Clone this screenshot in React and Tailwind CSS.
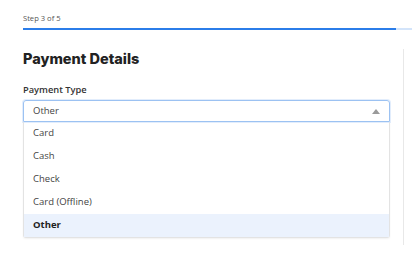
import React from 'react';

const options = ['Card', 'Cash', 'Check', 'Card (Offline)', 'Other'];

export default function App() {
  const selected = 'Other';

  return (
    <div className="w-[412px] h-[266px] bg-white overflow-hidden font-['Open_Sans',sans-serif] text-[#333]">
      <div className="pl-[23px] pt-[13px]">
        <div className="text-[7.6px] leading-[11px] text-[#555]">Step 3 of 5</div>
        <div className="flex mt-[4px] h-[2px]">
          <div className="w-[373px] bg-[#2b7de9]" />
          <div className="flex-1 bg-[#d3e4fa]" />
        </div>
      </div>

      <div className="ml-[23px] mt-[19px] w-[381px] h-[196px] border-r border-[#e8e8e8] pr-[13px]">
        <h1 className="font-['Inter',sans-serif] font-extrabold text-[14.5px] leading-[20px] text-[#222]">
          Payment Details
        </h1>

        <label className="block mt-[14px] text-[9.3px] leading-[14px] font-semibold text-[#333]">
          Payment Type
        </label>

        <div className="mt-[3px]">
          <div className="h-[22px] flex items-center justify-between pl-[9px] pr-[9px] border-[1.5px] border-[#9cc2f2] rounded-t-[3px] shadow-[0_0_0_1px_#e2edfc]">
            <span className="text-[9.5px] text-[#444]">{selected}</span>
            <svg width="8" height="5" viewBox="0 0 8 5">
              <path d="M4 0 L8 5 L0 5 Z" fill="#9a9a9a" />
            </svg>
          </div>
          <ul className="border border-t-0 border-[#e3e3e3] rounded-b-[3px] shadow-[0_1px_2px_rgba(0,0,0,0.06)]">
            {options.map((opt) => (
              <li
                key={opt}
                className={`h-[23px] flex items-center px-[9px] text-[9.5px] ${
                  opt === selected ? 'bg-[#ebf2fd] font-bold text-[#222]' : 'text-[#444]'
                }`}
              >
                {opt}
              </li>
            ))}
          </ul>
        </div>
      </div>
    </div>
  );
}
